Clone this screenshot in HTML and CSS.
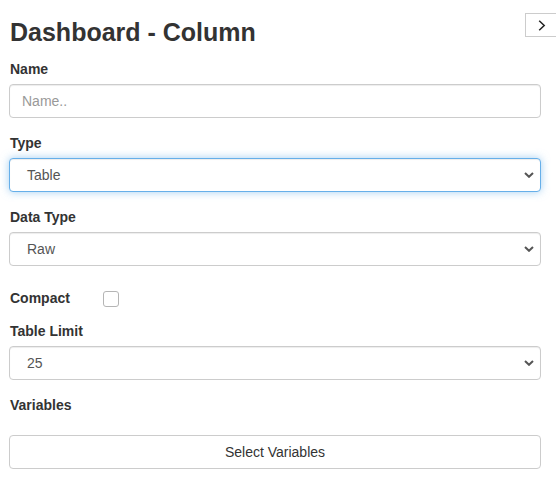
FILE: index.html
```html
<!DOCTYPE html>
<html>
<head>
<meta charset="utf-8">
<link rel="stylesheet" href="styles.css">
</head>
<body>
<div class="panel">
  <button class="toggle" type="button" aria-label="Collapse">
    <svg width="8" height="11" viewBox="0 0 8 11"><path d="M1.2 0.8 L6.2 5.5 L1.2 10.2" fill="none" stroke="#222" stroke-width="1.5"/></svg>
  </button>
  <h3 class="title">Dashboard - Column</h3>
  <form class="form">
    <div class="group">
      <label class="lbl">Name</label>
      <input class="control" type="text" placeholder="Name..">
    </div>
    <div class="group">
      <label class="lbl">Type</label>
      <div class="select-wrap">
        <div class="control select focus">Table</div>
        <svg class="caret" width="10" height="6" viewBox="0 0 10 6"><path d="M1 1 L5 4.8 L9 1" fill="none" stroke="#555" stroke-width="2"/></svg>
      </div>
    </div>
    <div class="group">
      <label class="lbl">Data Type</label>
      <div class="select-wrap">
        <div class="control select">Raw</div>
        <svg class="caret" width="10" height="6" viewBox="0 0 10 6"><path d="M1 1 L5 4.8 L9 1" fill="none" stroke="#555" stroke-width="2"/></svg>
      </div>
    </div>
    <div class="check-row">
      <label class="lbl check-lbl">Compact</label>
      <span class="checkbox"></span>
    </div>
    <div class="group">
      <label class="lbl">Table Limit</label>
      <div class="select-wrap">
        <div class="control select">25</div>
        <svg class="caret" width="10" height="6" viewBox="0 0 10 6"><path d="M1 1 L5 4.8 L9 1" fill="none" stroke="#555" stroke-width="2"/></svg>
      </div>
    </div>
    <div class="group vars">
      <label class="lbl">Variables</label>
    </div>
    <button class="btn" type="button">Select Variables</button>
  </form>
</div>
</body>
</html>
```

FILE: styles.css
```css
html, body {
  margin: 0;
  padding: 0;
  background: #fff;
  overflow: hidden;
}
body {
  font-family: "Liberation Sans", Arial, sans-serif;
  font-size: 14px;
  line-height: 20px;
  color: #333;
  width: 556px;
  height: 485px;
}
.panel {
  position: relative;
  display: flow-root;
  padding: 0 15px 0 9px;
}
.toggle {
  position: absolute;
  left: 525px;
  top: 13px;
  width: 32px;
  height: 24px;
  margin: 0;
  padding: 0;
  border: 1px solid #ccc;
  background: #fff;
  display: flex;
  align-items: center;
  justify-content: center;
}
.toggle svg { display: block; margin-left: 1px; }
.title {
  margin: 19px 0 13px 1px;
  font-size: 25px;
  line-height: 27px;
  font-weight: bold;
  color: #333;
}
.form {
  display: flex;
  flex-direction: column;
}
.group {
  display: flex;
  flex-direction: column;
  margin-bottom: 15px;
}
.lbl {
  display: block;
  font-weight: bold;
  font-size: 14px;
  line-height: 20px;
  margin: 0 0 5px 1px;
  color: #333;
}
.control {
  box-sizing: border-box;
  display: block;
  width: 100%;
  height: 34px;
  margin: 0;
  padding: 6px 12px;
  font-family: "Liberation Sans", Arial, sans-serif;
  font-size: 14px;
  line-height: 20px;
  color: #555;
  background: #fff;
  border: 1px solid #ccc;
  border-radius: 4px;
  box-shadow: inset 0 1px 1px rgba(0,0,0,.075);
  outline: none;
}
.control::placeholder { color: #999; }
.select { padding-left: 17px; }
.focus {
  border-color: #66afe9;
  box-shadow: inset 0 1px 1px rgba(0,0,0,.075), 0 0 8px rgba(102,175,233,.6);
}
.select-wrap { position: relative; }
.caret {
  position: absolute;
  right: 7px;
  top: 14px;
}
.check-row {
  display: flex;
  align-items: center;
  margin: 7px 0 13px 0;
  height: 20px;
}
.check-lbl { margin: 0 0 0 1px; width: 93px; }
.checkbox {
  box-sizing: border-box;
  width: 16px;
  height: 16px;
  border: 1px solid #b5b5b5;
  border-radius: 3px;
  background: #fff;
  margin-top: 2px;
}
.vars { margin-bottom: 20px; }
.vars .lbl { margin-bottom: 0; }
.btn {
  box-sizing: border-box;
  width: 100%;
  height: 34px;
  margin: 0;
  padding: 6px 12px;
  font-family: "Liberation Sans", Arial, sans-serif;
  font-size: 14px;
  line-height: 20px;
  color: #333;
  background: #fff;
  border: 1px solid #ccc;
  border-radius: 4px;
  text-align: center;
}
```
